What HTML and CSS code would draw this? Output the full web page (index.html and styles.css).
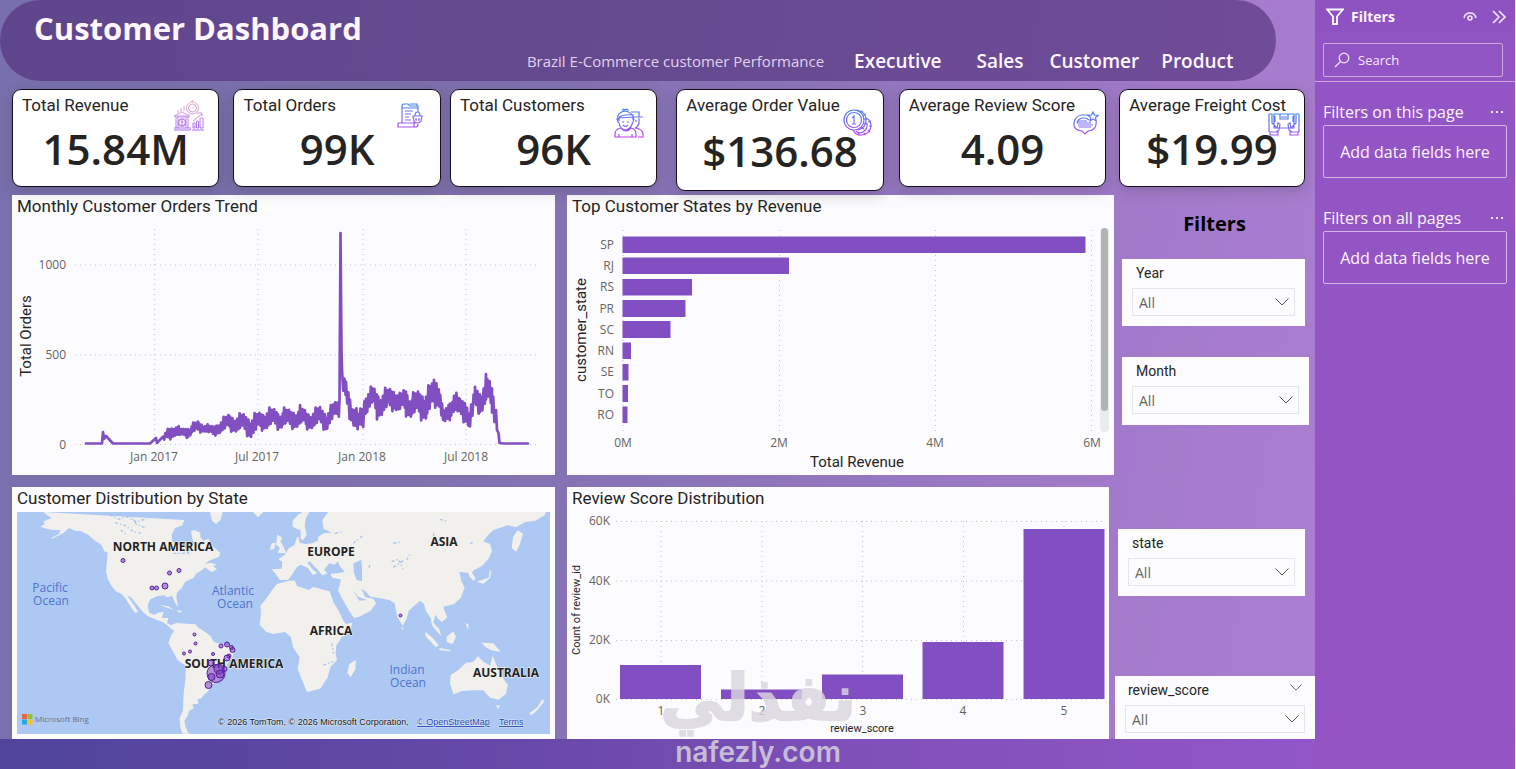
FILE: index.html
```html
<!DOCTYPE html>
<html lang="en">
<head>
<meta charset="utf-8">
<title>Customer Dashboard</title>
<link rel="stylesheet" href="styles.css">
</head>
<body>
<svg class="defs" aria-hidden="true">
  <defs>
    <linearGradient id="ink" x1="0" y1="0" x2="0" y2="30" gradientUnits="userSpaceOnUse">
      <stop offset="0" stop-color="#3f86f2"/><stop offset=".5" stop-color="#7d6cf2"/><stop offset="1" stop-color="#c63cf0"/>
    </linearGradient>
    <linearGradient id="inkPink" x1="0" y1="0" x2="0" y2="30" gradientUnits="userSpaceOnUse">
      <stop offset="0" stop-color="#f0b4c4"/><stop offset=".45" stop-color="#cc9be0"/><stop offset="1" stop-color="#a86af0"/>
    </linearGradient>
  </defs>
</svg>
<div class="app">
  <main class="report">
    <header class="banner">
      <h1 class="banner-title">Customer Dashboard</h1>
      <div class="banner-row">
        <p class="banner-sub">Brazil E-Commerce customer Performance</p>
        <nav class="nav">
          <a class="nav-exec" href="#executive">Executive</a>
          <a class="nav-sales" href="#sales">Sales</a>
          <a class="nav-cust" href="#customer">Customer</a>
          <a class="nav-prod" href="#product">Product</a>
        </nav>
      </div>
    </header>

    <section class="kpis" aria-label="Key figures">
      <article class="kpi">
        <h2 class="kpi-label">Total Revenue</h2><p class="kpi-value">15.84M</p>
        <svg class="kpi-icon i-rev" viewBox="0 0 32 32" width="32" height="32" fill="none" stroke="url(#inkPink)" stroke-width="1"><circle cx="19.500" cy="8" r="6"/><circle cx="19.500" cy="8" r="4"/><path d="M18 1h3M19.500 1v-.8M19.500 8l2.500-2.500M8 8v4M5 10v3M11 6v5M24 13h5v3M1 16l8-4 8 4zM2 17h14M3 17v11M5 17v11M13 17v11M15 17v11M1 28h17M1 30h17M20 28v-5h2v5zM23.500 28v-7h2v7zM27 28V18h3v10zM20 21l5-4 4-3M19 30h12"/><circle cx="9" cy="22.500" r="3.500" stroke-width="1.500"/><path d="M9 20v5M7.500 22h3"/></svg>
      </article>
      <article class="kpi k2">
        <h2 class="kpi-label">Total Orders</h2><p class="kpi-value">99K</p>
        <svg class="kpi-icon i-ord" viewBox="0 0 26 26" width="26" height="26" fill="none" stroke="url(#ink)" stroke-width="1.200"><path d="M5 20V3q0-2 2-2h4l2 2h8v6M5 5h16M13 1h7v2M8 8h8M8 11h6M8 14h4M8 17h6M1 20h16v4H1zM17 24h2q2 0 2-3M16 13h9l-1 5q-1 2-4 2t-3-2zM18 13q0-4 2.500-4t2.500 4M19 15v3M22 15v3"/></svg>
      </article>
      <article class="kpi k3">
        <h2 class="kpi-label">Total Customers</h2><p class="kpi-value">96K</p>
        <svg class="kpi-icon i-cus" viewBox="0 0 30 30" width="30" height="30" fill="none" stroke="url(#ink)" stroke-width="1.200"><path d="M3 12q0-8 8-9 8 1 9 9M5 13V9q6-3 14-2v5M9 3q-1-3 2-1 3-2 3 1M5 10q-3 3 0 5 1 6 6.500 7 5.500-1 7-7 2-3 0-5M5 10l14-1M1 29v-3q0-5 6-6 5 6 10 0 5 1 5 6v3zM5 29v-3M18 29v-3M17 4h8v5h4M19 9h9M25 10v5q-1 4-4 5 8 1 8 6v3h-5M8 14h2M13 14h2M9 17q2.500 3 5 0M22 12v2"/></svg>
      </article>
      <article class="kpi kpi-tall k4">
        <h2 class="kpi-label">Average Order Value</h2><p class="kpi-value">$136.68</p>
        <svg class="kpi-icon i-aov" viewBox="0 0 30 30" width="30" height="30" fill="none" stroke="url(#ink)" stroke-width="1.200"><circle cx="11" cy="12" r="10"/><circle cx="11" cy="12" r="7.500"/><path d="M9 10l2-2v8M9 16h4M14 2q9 2 9 10t-8 10M17 4l3-1M20 7l3-1M21 11h3M21 15l3 1M18 19l3 2M10 22q3 6 9 5 8-1 9-9 0-6-5-8M13 23q3 3 7 1 5-3 4-9M25 14l3-1M26 18h3M25 22l2 2M21 25l1 2M16 25l-1 2"/></svg>
      </article>
      <article class="kpi k5">
        <h2 class="kpi-label">Average Review Score</h2><p class="kpi-value">4.09</p>
        <svg class="kpi-icon i-rvw" viewBox="0 0 26 26" width="26" height="26" fill="none" stroke="url(#ink)" stroke-width="1.200"><path d="M17 4H9Q2 5 1 12t8 8l3 3 3-3q9-1 8-9M20 1l1.500 3 3.500.5-2.500 2 .7 3.500-3.200-2-3 2 .7-3.500L15 4.500l3.500-.5zM4 12q1-5 7-5 3 0 5 2M5 10h9M4 12h14M5 14h15M6 16h12"/></svg>
      </article>
      <article class="kpi k6">
        <h2 class="kpi-label">Average Freight Cost</h2><p class="kpi-value">$19.99</p>
        <svg class="kpi-icon i-frt" viewBox="0 0 32 24" width="32" height="24" fill="none" stroke="url(#ink)" stroke-width="1.200"><path d="M6 1h20v14H6zM12 1v5h8V1M13 4h6M1 1h3v9l5 5 1-5 2 1-1 6-3 2M31 1h-3v9l-5 5-1-5-2 1 1 6 3 2M1 1v18M31 1v18M2 19h8v3H2zM22 19h8v3h-8zM7 3v6M25 3v6M13 15h6"/></svg>
      </article>
    </section>

    <section class="board">
      <div class="col col-a">
        <figure class="panel">
          <figcaption class="panel-title">Monthly Customer Orders Trend</figcaption>
          <svg class="chart" viewBox="12 219 543 256" role="img" aria-label="Orders trend">
            <path class="grid" d="M75 265H537M75 355H537M75 444.500H537M154.500 229V444M258 229V444M363 229V444M466 229V444"/>
            <polyline class="trend" id="trend" points=""/>
            <g class="tick end"><text x="66" y="269">1000</text><text x="66" y="359">500</text><text x="66" y="449">0</text></g>
            <g class="tick mid"><text x="154" y="461">Jan 2017</text><text x="257" y="461">Jul 2017</text><text x="362" y="461">Jan 2018</text><text x="466" y="461">Jul 2018</text></g>
            <text class="axis" transform="translate(31 336) rotate(-90)">Total Orders</text>
          </svg>
        </figure>
        <figure class="panel panel-map">
          <figcaption class="panel-title">Customer Distribution by State</figcaption>
          <svg class="chart" viewBox="17 512 533 222" role="img" aria-label="Customer map">
            <rect x="17" y="512" width="533" height="222" fill="#adc8f3"/>
            <g class="land" transform="translate(0 480) scale(.33333)">
              <path d="M130 96l15 12 10 6-24 10 3 8-13 8 18 6 20 4 22 0-4 12-24 12 4 2 34-18 16-14 18 8 18 2 22 10 20 18 20 14 8 18 10 4-2 24-3 30 5 24 10 20 14 18 18 8 12 14 14 22 14 20 10-2-14-22-20-28 14 8 16 20 20 24 12 10 22 10 24 8 18 14 10 10 14-4-16-10-14-6 4-16-20 0 6-18-16 2-12 6-16-6-4-22 8-18 22-10 20-2 8 6 16-4 8 20 10 14-6-30 2-14 16-16 8-16 16-8 10-4 6-12 16-10 12-10 8 6 12 8 16-8-12-10 12-4-18-6-18 4 12-10 30-12 4-12-22-18-14-24-14 6-10-10 0-14-18-8-10 4 4 22 6 14-14 12-2 24-10-14-2-10-24-8-14-8-2-22 10-20 22-8 6-16z"/>
              <path d="M515 435l14-6 30 2 28 2 8 10 16 10 20 14 10 18 22 8 26 4 16 14-8 20-16 22-6 26-14 20-24 14-12 20-16 14-4 8-12 2 2 14-18 2 4 12-14 8-4 14-10 16 4 18 6 16 8 4-24 0-6-20-2-26 10-24 2-52 6-46 0-36-24-16-16-30-12-22 8-22 10-16z"/>
              <path d="M783 400l-2-22 16-20 18-26 16-20 36-10 18 0 6 16 36 12 12-10 34 10 16 4 12 34 16 26 12 26 8 12 20-4-6 22-26 24-16 22-2 24 4 20-20 22-8 30-22 34-40 10-14-34-14-34 6-36-20-30-6-30-18-16-36 6-20-6-20-22z"/>
              <path d="M1048 552l20-12-2 28-14 24-10-14z"/>
              <path d="M815 268l30-2 2-20-12-8 18-12 14-22 16-8 8-24 4-2 4 18 16 4 22-2 16-8 2-12 16-10 24-2-24-12-4-26 16-22 1-8h652v14l-30 18-30 4-28 16-24-6-44 14-16 16-14 18 20 8 6 20-10 24-20 22-24 12-6 8 10 16-4 10-12-12-6-14-26-2 6 28 10 18-12 32-20 18-32 8 4 14 8 18-16 14-12-10-8-12-6 24 18 20 6 20-10-10-18-22-4-22-14-20-6-22-12-10-8 8-26 22-6 24-12 22-16-28-8-40-16-10-30-6-26-4-14-14-14-10 12 26 24 4 8 14-16 22-34 18-16 4-16-24-22-38-10-22 6-16 2-16-24-4-6-10 2-14-14-8 0 20-14 4-12-16-10-10-14-16-8 4 14 18 16 14-14 4-14-20-22-10-12 8-14 22-12 16-24 0-10-14z"/>
              <path d="M878 140l0-18 16-18 14-8h20l-10 18-4 24 6 26-10 16-8-2 0-28-12-4zM832 164l14 8-4 12 12 24 4 12-26-2 8-14-12-10zM815 190l12-2-4 18-14 4zM630 96h38l-6 24-14 12-12-10zM758 96h32l-16 16zM1535 205l4-34 14-20 16 10-8 28-12 26z"/>
              <path d="M1352 585l22-14 24-22 22-4 14-16 16 16 20 12 8-30 12 30 22 42 12 16-6 26-22 18-26-6-20-22-28 0-36 2-26 10-10-34zM1340 470l20-16 8 16-10 22-18-6zM1274 454l24 20 18 22-8 6-30-32zM1318 504l34 6-2 4-32-4zM1444 488l36 2 22 26-30-6-14-8zM1588 700l24-18 16-26 4 10-20 24-18 16zM1430 305l36-12 4-24 4 6-4 20-20 16zM1203 440l8 4-4 6zM1396 428l10 6-2 16zM1488 676l12 0-6 12zM478 375l26 4 18 10-16-4zM530 390l18 4-10 4z"/>
            </g>
            <g fill="#adc8f3" transform="translate(0 480) scale(.33333)">
              <path d="M972 270l16-20 16 4 10-10 4 12 16 20-24 4-22 2zM1060 250l24-10 2 20 0 44-16-4-8-20zM945 150l8-30 20-24-26 10-16 24 4 30z"/>
              <path d="M996 342l16 24 26 42-4 4-30-44zM1058 330l16 20 28 10-24 2zM1020 480l6-12 6 12-8 10z"/>
            </g>
            <g fill="none" stroke="#a9c2ee" stroke-width="4" stroke-dasharray="9 6 4 7" transform="translate(0 480) scale(.33333)">
              <path d="M330 104l26 14 24-8 30 16 30-10M345 128l30 8 26 20 22 4M362 150l18 14M390 104l20 30 30 10M520 220l34 0 26-14M1060 190l30-24M1180 190l20-4M1300 160l4 24M1320 118l20 6M1175 245l20-8 14 30M1110 255l-6 14M1005 160l20-4M995 490l6 30M970 555l30-10M1220 240l12-20M1410 190l12-4M1180 262l30-20"/>
            </g>
            <g class="continent">
              <text x="163" y="551">NORTH AMERICA</text><text x="331" y="556">EUROPE</text><text x="444" y="546">ASIA</text><text x="331" y="635">AFRICA</text><text x="234" y="668">SOUTH AMERICA</text><text x="506" y="677">AUSTRALIA</text>
            </g>
            <g class="ocean">
              <text x="50" y="592">Pacific</text><text x="51" y="605">Ocean</text><text x="233" y="595">Atlantic</text><text x="235" y="608">Ocean</text><text x="407" y="674">Indian</text><text x="408" y="687">Ocean</text>
            </g>
            <g class="dots">
              <circle cx="123" cy="560.500" r="2"/><circle cx="169.500" cy="573" r="2"/><circle cx="179" cy="570.500" r="2"/><circle cx="152" cy="588" r="2"/><circle cx="156.500" cy="588" r="2"/><circle cx="165" cy="586" r="3"/><circle cx="194.500" cy="634.500" r="1.500"/><circle cx="195.500" cy="643.500" r="1.500"/><circle cx="184" cy="653.500" r="1.500"/><circle cx="190" cy="651.500" r="1.500"/><circle cx="213" cy="654" r="1.500"/><circle cx="221" cy="646" r="2"/><circle cx="227" cy="644.500" r="2.500"/><circle cx="231.500" cy="647.500" r="2"/><circle cx="232.500" cy="650" r="2.500"/><circle cx="229" cy="656" r="2"/><circle cx="227" cy="658" r="3"/><circle cx="211" cy="663" r="3"/><circle cx="216" cy="673.500" r="9"/><circle cx="219" cy="669" r="5"/><circle cx="220" cy="674" r="4"/><circle cx="224.500" cy="669" r="2.500"/><circle cx="211.500" cy="677" r="3.500"/><circle cx="208.500" cy="685" r="3.500"/><circle cx="400.500" cy="615.500" r="1.500"/>
            </g>
            <path fill="#f0643a" d="M22 714h5v5h-5z"/><path fill="#8cc63f" d="M27.500 714h5v5h-5z"/><path fill="#21a8ee" d="M22 719.500h5v5h-5z"/><path fill="#fdbf1c" d="M27.500 719.500h5v5h-5z"/>
            <text class="bing" x="35" y="722">Microsoft Bing</text>
            <text class="credit" x="218" y="725">© 2026 TomTom, © 2026 Microsoft Corporation,</text>
            <a href="#osm"><text class="credit link" x="417" y="725">© OpenStreetMap</text></a>
            <a href="#terms"><text class="credit link" x="499" y="725">Terms</text></a>
          </svg>
        </figure>
      </div>

      <div class="col col-b">
        <figure class="panel">
          <figcaption class="panel-title">Top Customer States by Revenue</figcaption>
          <svg class="chart" viewBox="567 219 547 256" role="img" aria-label="Revenue by state">
            <path class="grid" d="M623 230V432M779.500 230V432M935.500 230V432M1091.500 230V432"/>
            <path class="bar" d="M622.500 236.500h463v16.500h-463zM622.500 257.500h166.500V274h-166.500zM622.500 279h69.500v16.500h-69.500zM622.500 300h63v17h-63zM622.500 321h48v17h-48zM622.500 342.500h8.500V359h-8.500zM622.500 364h6v16.500h-6zM622.500 385h5.500v17h-5.500zM622.500 406.500h5V423h-5z"/>
            <g class="tick end"><text x="614" y="249">SP</text><text x="614" y="270">RJ</text><text x="614" y="291">RS</text><text x="614" y="313">PR</text><text x="614" y="334">SC</text><text x="614" y="355">RN</text><text x="614" y="376">SE</text><text x="614" y="398">TO</text><text x="614" y="419">RO</text></g>
            <g class="tick mid"><text x="623" y="447">0M</text><text x="779" y="447">2M</text><text x="935" y="447">4M</text><text x="1092" y="447">6M</text></g>
            <text class="axis" transform="translate(586 330) rotate(-90)">customer_state</text>
            <text class="axis" x="857" y="467">Total Revenue</text>
            <rect x="1100" y="228" width="9" height="204" rx="4" fill="#ececec"/><rect x="1101" y="228" width="7" height="183" rx="3.500" fill="#b3b3b3"/>
          </svg>
        </figure>
        <figure class="panel panel-score">
          <figcaption class="panel-title">Review Score Distribution</figcaption>
          <svg class="chart" viewBox="567 512 542 227" role="img" aria-label="Review scores">
            <path class="grid" d="M616 521.500H1105M616 581H1105M616 640.500H1105M616 699.500H1105M661 521V699M762 521V699M862.500 521V699M963.500 521V699M1064 521V699"/>
            <path class="bar" d="M620 665h81v34h-81zM721 689.500h81v9.500h-81zM822 674.500h81V699h-81zM922.500 642h81v57h-81zM1023.500 529h81v170h-81z"/>
            <g class="tick end"><text x="610" y="525">60K</text><text x="610" y="585">40K</text><text x="610" y="644">20K</text><text x="610" y="703">0K</text></g>
            <g class="tick mid"><text x="661" y="715">1</text><text x="762" y="715">2</text><text x="863" y="715">3</text><text x="963" y="715">4</text><text x="1064" y="715">5</text></g>
            <text class="axis small" transform="translate(580 610) rotate(-90)">Count of review_id</text>
            <text class="axis small" x="862" y="732">review_score</text>
          </svg>
        </figure>
      </div>

      <aside class="slicers">
        <h2 class="slicers-title">Filters</h2>
        <div class="slicer s-year"><label for="year">Year</label>
          <div class="pick"><select id="year"><option>All</option></select><svg class="chev" viewBox="0 0 14 8"><path d="M.5.5L7 7l6.500-6.500"/></svg></div></div>
        <div class="slicer s-month"><label for="month">Month</label>
          <div class="pick"><select id="month"><option>All</option></select><svg class="chev" viewBox="0 0 14 8"><path d="M.5.5L7 7l6.500-6.500"/></svg></div></div>
        <div class="slicer s-state"><label for="state">state</label>
          <div class="pick"><select id="state"><option>All</option></select><svg class="chev" viewBox="0 0 14 8"><path d="M.5.5L7 7l6.500-6.500"/></svg></div></div>
        <div class="slicer s-score"><div class="slicer-head"><label for="score">review_score</label><button class="expand" aria-label="Expand"><svg viewBox="0 0 14 8" width="12" height="7"><path d="M.5.5L7 7l6.500-6.500"/></svg></button></div>
          <div class="pick"><select id="score"><option>All</option></select><svg class="chev" viewBox="0 0 14 8"><path d="M.5.5L7 7l6.500-6.500"/></svg></div></div>
      </aside>
    </section>
    <footer class="band"></footer>
    <div class="watermark" aria-hidden="true"><span class="wm-ar" lang="ar" dir="rtl">نفذلي</span><span class="wm-en">nafezly.com</span></div>
  </main>

  <aside class="pane">
    <div class="pane-top">
      <div class="pane-head">
        <svg viewBox="0 0 18 18" width="18" height="18" fill="none" stroke="#fff" stroke-width="1.800"><path d="M1.200 1.500h15.600L11 8.500V16H7V8.500z"/></svg>
        <h2>Filters</h2>
        <button aria-label="Show pane"><svg viewBox="0 0 14 10" width="14" height="10" fill="none" stroke="#f3e6fb" stroke-width="1.600"><path d="M1 6Q2 1 7 1t6 5"/><circle cx="7" cy="6" r="2"/></svg></button>
        <button aria-label="Collapse pane"><svg viewBox="0 0 14 14" width="14" height="14" fill="none" stroke="#f3e6fb" stroke-width="1.600"><path d="M1 1l6 6-6 6M7 1l6 6-6 6"/></svg></button>
      </div>
      <label class="search"><svg viewBox="0 0 16 16" width="16" height="16" fill="none" stroke="#f3e6fb" stroke-width="1.300"><circle cx="10" cy="6" r="4.800"/><path d="M6.500 9.500L1 15"/></svg><input type="text" placeholder="Search" aria-label="Search"></label>
    </div>
    <section class="well"><div class="well-head"><h3>Filters on this page</h3><button aria-label="More options"><svg viewBox="0 0 12 2" width="12" height="2"><path d="M0 0h2v2H0zM5 0h2v2H5zM10 0h2v2h-2z" fill="#f3e6fb"/></svg></button></div><div class="drop">Add data fields here</div></section>
    <section class="well"><div class="well-head"><h3>Filters on all pages</h3><button aria-label="More options"><svg viewBox="0 0 12 2" width="12" height="2"><path d="M0 0h2v2H0zM5 0h2v2H5zM10 0h2v2h-2z" fill="#f3e6fb"/></svg></button></div><div class="drop">Add data fields here</div></section>
  </aside>
</div>
<script src="chart.js"></script>
</body>
</html>
```

FILE: styles.css
```css
* { box-sizing: border-box; }
body { margin: 0; font-family: "Open Sans", "Noto Sans", sans-serif; color: #252423; }
h1, h2, h3, p, figure { margin: 0; }
a { color: inherit; text-decoration: none; }
button { background: none; border: 0; padding: 0; display: flex; cursor: pointer; }
.defs { position: absolute; width: 0; height: 0; }

.app { display: flex; min-height: 100vh; background: #fff; }
.report {
  position: relative; flex: 1; min-width: 0; display: flex; flex-direction: column;
  background: linear-gradient(100deg, #7870ae 0%, #7c70ab 28%, #8a74b8 52%, #a37acb 82%, #ab7ed2 100%);
}

.banner {
  min-height: 81px; width: 97%; padding: 9px 42px 0 34px; border-radius: 40px;
  background: linear-gradient(100deg, #5f468c, #654a90 50%, #704b98);
  color: #fff; display: flex; flex-direction: column;
}
.banner-title { font-size: 31px; line-height: 38px; font-weight: 700; color: #fff6ff; }
.banner-row { display: flex; justify-content: flex-end; align-items: center; }
.banner-sub { font-size: 15px; line-height: 26px; color: #e0d2ee; margin-right: 30px; }
.nav { display: flex; font-size: 19px; line-height: 28px; font-weight: 600; color: #fff6ff; }
.nav-sales { margin-left: 35px; }
.nav-cust { margin-left: 26px; }
.nav-prod { margin-left: 22px; }

.kpis { display: flex; align-items: flex-start; padding: 8px 10px 4px 12px; }
.kpi {
  position: relative; flex: 208; min-width: 0; padding: 4px 9px;
  background: #fff; border: 1px solid #14101c; border-radius: 9px;
  box-shadow: 0 4px 14px rgba(60, 60, 60, .25);
}
.k2 { margin-left: 14px; }
.k3 { margin-left: 9px; }
.k4 { margin-left: 19px; }
.k5 { margin-left: 15px; }
.k6 { margin-left: 13px; flex-grow: 184; }
.kpi-label { font-family: Roboto, sans-serif; font-size: 17px; line-height: 22px; font-weight: 400; white-space: nowrap; }
.kpi-value { font-size: 42px; line-height: 66px; font-weight: 600; text-align: center; color: #252423; white-space: nowrap; }
.kpi-tall .kpi-value { line-height: 70px; }
.kpi-icon { position: absolute; }
.i-rev { right: 13px; top: 10px; }
.i-ord { right: 17px; top: 13px; }
.i-cus { right: 12px; top: 18px; }
.i-aov { right: 10px; top: 18px; }
.i-rvw { right: 6px; top: 21px; }
.i-frt { right: 4px; top: 23px; }

.board { display: flex; padding-left: 12px; }
.col { min-width: 0; display: flex; flex-direction: column; gap: 12px; }
.col-a { flex: 543; margin-right: 12px; }
.col-b { flex: 547; }
.panel { background: #fcfcfe; }
.panel-score { margin-right: 5px; }
.panel-title { font-family: Roboto, sans-serif; font-size: 17px; line-height: 22px; padding: 0 5px 2px; }
.panel-map .panel-title, .panel-score .panel-title { padding-bottom: 3px; }
.panel-map { padding-bottom: 5px; }
.panel-map .chart { width: calc(100% - 10px); margin: 0 5px; }
.chart { display: block; width: 100%; height: auto; }

.grid { fill: none; stroke: #c4c4c8; stroke-width: 1; stroke-dasharray: 1 4; }
.trend { fill: none; stroke: #824fc3; stroke-width: 2.7px; stroke-linejoin: round; stroke-linecap: round; }
.bar { fill: #824fc3; }
.tick { font-size: 12px; fill: #66645f; font-family: "Open Sans", sans-serif; }
.end { text-anchor: end; }
.mid { text-anchor: middle; }
.axis { font-family: Roboto, sans-serif; font-size: 15px; fill: #252423; text-anchor: middle; }
.small { font-size: 11px; }
.land { fill: #f1f0ed; }
.continent { font-size: 12px; font-weight: 700; fill: #222; text-anchor: middle; paint-order: stroke; stroke: #f6f5f3; stroke-width: 1px; }
.ocean { font-size: 12px; fill: #4f74cf; text-anchor: middle; }
.dots { fill: rgba(120, 50, 190, .5); stroke: #54209c; stroke-width: 1; }
.bing { font-size: 8px; fill: #68717e; }
.credit { font-family: "Liberation Sans", sans-serif; font-size: 9px; fill: #111; paint-order: stroke; stroke: #dce8fb; stroke-width: 1px; }
.link { fill: #2745b0; text-decoration: underline; }

.slicers { flex: 201; min-width: 0; padding-top: 15px; }
.slicers-title { font-size: 20px; line-height: 28px; font-weight: 700; color: #000; text-align: center; }
.slicer { background: #fcfcfe; padding: 3px 10px 10px; font-family: Roboto, sans-serif; font-size: 14px; }
.slicer label { display: block; line-height: 22px; padding: 0 4px 4px; }
.s-year { margin: 21px 10px 0 8px; }
.s-month { margin: 31px 6px 0 8px; padding-bottom: 11px; }
.s-state { margin: 104px 10px 0 4px; }
.s-score { margin: 80px 0 0 1px; padding-bottom: 6px; }
.slicer-head { display: flex; justify-content: space-between; align-items: flex-start; }
.slicer-head label { padding-left: 3px; }
.expand { margin: 5px 3px 0 0; }
.pick { position: relative; }
.pick select { appearance: none; display: block; width: 100%; height: 28px; padding: 0 6px; border: 1px solid #e6e5e8; border-radius: 0; background: #fcfcfe; color: #66645f; font: 14px "Open Sans", sans-serif; }
.chev { position: absolute; right: 6px; top: 10px; width: 14px; height: 8px; }
.chev path, .expand path { fill: none; stroke: #55535a; stroke-width: 1; }

.band { flex: 1; min-height: 30px; background: linear-gradient(90deg, #4f449b, #6849a9 40%, #7f50b8 65%, #9256c8); }

.watermark { position: absolute; left: 665px; top: 659px; width: 186px; display: flex; flex-direction: column; align-items: center; color: #d9d6de; opacity: .82; pointer-events: none; }
.wm-ar { font: 700 64px/78px "DejaVu Sans", sans-serif; -webkit-text-stroke: 2px #d9d6de; }
.wm-en { font: 600 28px/30px Inter, sans-serif; }

.pane { flex: 0 0 201px; min-width: 0; border-right: 1px solid #f0e4f8; background: linear-gradient(180deg, #8e52c0, #9355c5 12%, #9454c3); color: #fdf4ff; }
.pane-top { padding: 6px 12px 4px 8px; border-bottom: 1px solid #d3a7dc; }
.pane-head { display: flex; align-items: center; height: 22px; padding: 0 0 0 3px; }
.pane-head h2 { flex: 1; font-size: 14px; line-height: 22px; font-weight: 700; margin-left: 7px; }
.pane-head button { margin-left: 15px; }
.pane-head button:last-child { margin-right: -3px; }
.search { display: flex; align-items: center; gap: 8px; height: 34px; margin-top: 15px; padding: 0 10px; border: 1px solid #cfa9de; border-radius: 2px; }
.search input { min-width: 0; width: 100%; flex: 1; background: none; border: 0; outline: 0; padding: 0; color: #fff; font: 13px "Open Sans", sans-serif; }
.search input::placeholder { color: #f8ebff; opacity: 1; }
.well { padding: 17px 8px 0; }
.well + .well { margin-top: 10px; }
.well-head { display: flex; justify-content: space-between; align-items: center; height: 26px; padding-right: 4px; }
.well-head h3 { font-size: 16px; line-height: 24px; font-weight: 400; white-space: nowrap; }
.drop { height: 53px; display: flex; align-items: center; justify-content: center; border: 1px solid #d7b3e2; border-radius: 2px; font-size: 16px; white-space: nowrap; }
```

FILE: chart.js
```js
const envelope = [
  [163, 437, 441], [168, 429, 440], [175, 424, 435], [182, 430, 437], [188, 427, 437],
  [192, 424, 433], [198, 422, 432], [204, 424, 431], [213, 427, 436], [220, 420, 432],
  [230, 415, 430], [240, 415, 431], [251, 416, 436], [262, 413, 429], [267, 409, 427],
  [278, 411, 428], [283, 409, 426], [290, 411, 428], [300, 407, 425], [306, 412, 428],
  [320, 408, 426], [326, 411, 429], [334, 404, 420], [339, 400, 415]
];
const afterPeak = [
  [342, 372, 390], [346, 383, 405], [350, 395, 418], [354, 405, 425], [358, 414, 434],
  [362, 407, 430], [366, 390, 412], [372, 388, 406], [377, 392, 417], [384, 390, 412],
  [390, 390, 410], [395, 387, 408], [400, 395, 412], [406, 389, 414], [412, 395, 416],
  [420, 392, 418], [426, 390, 417], [432, 385, 412], [434, 377, 405], [439, 379, 405],
  [442, 405, 420], [445, 412, 427], [450, 400, 418], [454, 391, 410], [460, 400, 418],
  [467, 398, 422], [470, 412, 428], [475, 388, 410], [480, 390, 412], [486, 377, 405],
  [492, 386, 410], [495, 400, 425]
];
const wobble = [-.1, .2, 0, .4, -.05, .25, .1];

function weave(rows) {
  const out = [];
  let n = 0;
  for (let i = 0; i < rows.length - 1; i++) {
    const [x0, h0, l0] = rows[i];
    const [x1, h1, l1] = rows[i + 1];
    for (let x = x0; x < x1; x += 1.2) {
      const t = (x - x0) / (x1 - x0);
      const high = h0 + (h1 - h0) * t;
      const low = l0 + (l1 - l0) * t;
      const w = wobble[n % wobble.length] * (low - high);
      out.push([x, n % 2 ? low - w : high + w]);
      n++;
    }
  }
  return out;
}

const points = [
  [86, 443.5], [102, 443.5], [103, 432], [104, 439], [106, 436], [113, 443.5], [150, 443.5],
  [156, 438], [157, 443],
  ...weave(envelope),
  [339.5, 400], [340.5, 233], [341.5, 350],
  ...weave(afterPeak),
  [496, 410], [497, 430], [498.5, 433], [499.5, 443], [504, 443.5], [528, 443.5]
];
document.getElementById("trend").setAttribute("points", points.map(p => p.join(",")).join(" "));
```
